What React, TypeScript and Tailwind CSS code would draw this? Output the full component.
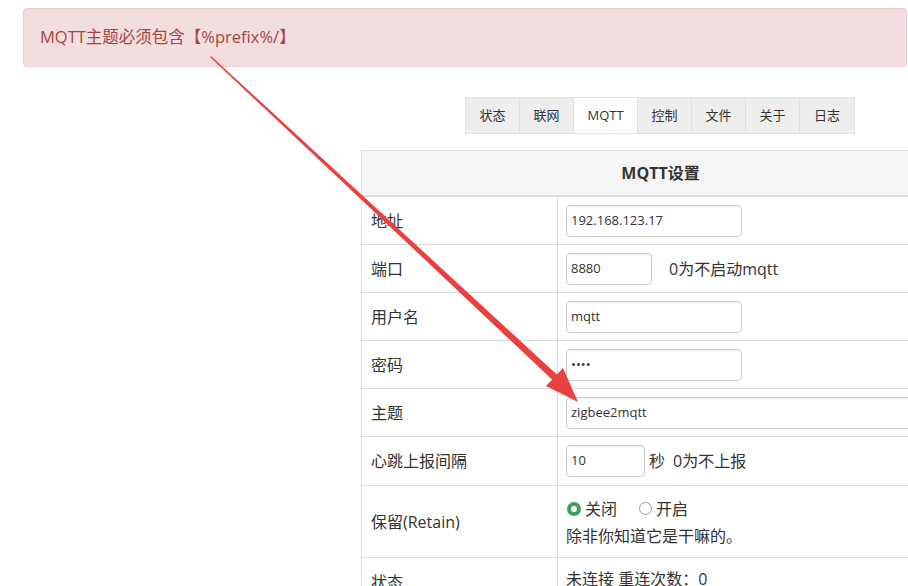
const tabs = ["状态", "联网", "MQTT", "控制", "文件", "关于", "日志"];

function Field({ value, w }: { value: string; w: string }) {
  return (
    <div
      className={`${w} h-[32px] border border-[#ccc] rounded-[4px] bg-white px-[4px] flex items-center text-[13px] text-[#333] shadow-[inset_0_1px_1px_rgba(0,0,0,0.075)]`}
    >
      {value}
    </div>
  );
}

function Row({ label, children, h = "h-[48px]" }: { label: string; children: React.ReactNode; h?: string }) {
  return (
    <div className={`flex ${h} border-t border-[#ddd]`}>
      <div className="w-[196px] shrink-0 border-r border-[#ddd] flex items-center pl-[9px] text-[16px] text-[#333]">
        {label}
      </div>
      <div className="flex-1 flex items-center pl-[8px] text-[16px] text-[#333]">{children}</div>
    </div>
  );
}

function Arrow() {
  // red annotation arrow drawn over the page
  return (
    <svg className="absolute left-0 top-0 pointer-events-none" width="908" height="586">
      <polygon points="210,57 211,56 566,383 561,388" fill="#e8413f" />
      <polygon points="578,402 546,386 563,368" fill="#e8413f" />
    </svg>
  );
}

export default function App() {
  return (
    <div
      className="relative w-[908px] h-[586px] overflow-hidden bg-white"
      style={{ fontFamily: '"Open Sans", "Noto Sans CJK SC", sans-serif' }}
    >
      <div className="pt-[8px] pl-[23px]">
        <div className="w-[884px] h-[59px] bg-[#f2dede] border border-[#ebccd1] rounded-[4px] flex items-center pl-[16px] text-[16.5px] text-[#a94442]">
          MQTT主题必须包含【%prefix%/】
        </div>
      </div>

      <div className="ml-[361px] w-[598px] mt-[30px]">
        <div className="flex justify-center">
          <div className="flex h-[37px] border border-[#e3e3e3] bg-[#eee]">
            {tabs.map((t) => (
              <div
                key={t}
                className={`flex items-center justify-center text-[13px] text-[#333] border-r border-[#e0e0e0] last:border-r-0 ${
                  t === "MQTT" ? "w-[64px] bg-white" : "w-[54px]"
                }`}
              >
                {t}
              </div>
            ))}
          </div>
        </div>

        <div className="mt-[16px] border-l border-t border-[#ddd]">
          <div className="h-[46px] bg-[#f5f5f5] border-b-2 border-[#ddd] flex items-center justify-center text-[16px] font-bold text-[#333]">
            MQTT设置
          </div>
          <div className="-mt-px">
            <Row label="地址">
              <Field value="192.168.123.17" w="w-[176px]" />
            </Row>
            <Row label="端口">
              <Field value="8880" w="w-[86px]" />
              <span className="ml-[17px]">0为不启动mqtt</span>
            </Row>
            <Row label="用户名">
              <Field value="mqtt" w="w-[176px]" />
            </Row>
            <Row label="密码">
              <Field value="••••" w="w-[176px]" />
            </Row>
            <Row label="主题">
              <Field value="zigbee2mqtt" w="w-[384px]" />
            </Row>
            <Row label="心跳上报间隔" h="h-[49px]">
              <Field value="10" w="w-[79px]" />
              <span className="ml-[4px]">秒</span>
              <span className="ml-[8px]">0为不上报</span>
            </Row>
            <Row label="保留(Retain)" h="h-[72px]">
              <div className="flex flex-col gap-[3px] pt-[1px]">
                <div className="flex items-center">
                  <span className="w-[14px] h-[14px] rounded-full border-[4px] border-[#3aa35b] bg-white ml-[1px]" />
                  <span className="ml-[4px]">关闭</span>
                  <span className="w-[13px] h-[13px] rounded-full border border-[#999] bg-white ml-[22px]" />
                  <span className="ml-[4px]">开启</span>
                </div>
                <div>除非你知道它是干嘛的。</div>
              </div>
            </Row>
            <Row label="状态">
              <span className="-mt-[5px]">未连接 重连次数：0</span>
            </Row>
          </div>
        </div>
      </div>

      <Arrow />
    </div>
  );
}
